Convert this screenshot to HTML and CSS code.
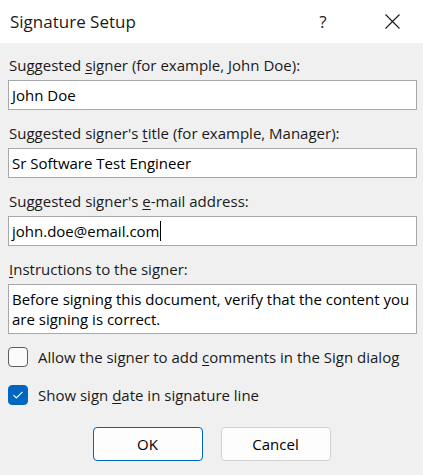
FILE: index.html
```html
<!DOCTYPE html>
<html>
<head>
<meta charset="utf-8">
<link rel="stylesheet" href="styles.css">
</head>
<body>
<div class="dialog">
  <div class="titlebar">
    <div class="title">Signature Setup</div>
    <div class="help">?</div>
    <div class="close">
      <svg width="15" height="15" viewBox="0 0 15 15"><path d="M0.5 0.5 L14.5 14.5 M14.5 0.5 L0.5 14.5" stroke="#1a1a1a" stroke-width="1.1" fill="none"/></svg>
    </div>
  </div>
  <div class="content">
    <div class="field">
      <div class="label">Suggested <u>s</u>igner (for example, John Doe):</div>
      <div class="input">John Doe</div>
    </div>
    <div class="field">
      <div class="label">Suggested signer's <u>t</u>itle (for example, Manager):</div>
      <div class="input">Sr Software Test Engineer</div>
    </div>
    <div class="field">
      <div class="label">Suggested signer's <u>e</u>-mail address:</div>
      <div class="input">john.doe@email.com<span class="caret"></span></div>
    </div>
    <div class="field">
      <div class="label"><u>I</u>nstructions to the signer:</div>
      <div class="input textarea">Before signing this document, verify that the content you are signing is correct.</div>
    </div>
    <div class="checks">
      <div class="check">
        <span class="box"></span>
        <span class="clabel">Allow the signer to add <u>c</u>omments in the Sign dialog</span>
      </div>
      <div class="check">
        <span class="box checked">
          <svg width="12" height="10" viewBox="0 0 12 10"><path d="M1.5 5.2 L4.3 8 L10.5 1.8" stroke="#fff" stroke-width="1.1" fill="none"/></svg>
        </span>
        <span class="clabel">Show sign <u>d</u>ate in signature line</span>
      </div>
    </div>
    <div class="buttons">
      <div class="btn primary">OK</div>
      <div class="btn">Cancel</div>
    </div>
  </div>
</div>
</body>
</html>
```
FILE: styles.css
```css
html, body {
  margin: 0;
  padding: 0;
  background: #f0f0f0;
}
body {
  font-family: "Open Sans", "Noto Sans", sans-serif;
  color: #1a1a1a;
  width: 423px;
  height: 475px;
  overflow: hidden;
}
.titlebar {
  height: 43px;
  background: #fff;
  display: flex;
  align-items: center;
}
.title {
  font-size: 17px;
  padding-left: 10px;
  flex: 1;
}
.help {
  font-size: 17px;
  width: 24px;
  text-align: center;
  margin-right: 50px;
}
.close {
  width: 15px;
  height: 15px;
  margin-right: 23px;
  display: flex;
}
.content {
  padding: 12px 6px 0 8px;
}
.field {
  margin-bottom: 13px;
}
.label {
  font-size: 15px;
  line-height: 20px;
  height: 20px;
  margin-bottom: 5px;
  margin-left: 1px;
  white-space: nowrap;
}
.label u, .clabel u {
  text-underline-offset: 2px;
}
.input {
  box-sizing: border-box;
  height: 30px;
  background: #fff;
  border: 1px solid #a8a8aa;
  font-size: 15px;
  line-height: 28px;
  padding-left: 3px;
  color: #000;
  display: flex;
  align-items: center;
}
.textarea {
  height: 50px;
  display: block;
  line-height: 20px;
  padding: 4px 4px 0 3px;
}
.caret {
  display: inline-block;
  width: 1px;
  height: 20px;
  background: #000;
  margin-left: 1px;
}
.checks {
  display: flex;
  flex-direction: column;
  gap: 18px;
  margin-top: 2px;
}
.check {
  display: flex;
  align-items: center;
  height: 20px;
}
.box {
  box-sizing: border-box;
  width: 20px;
  height: 20px;
  border: 1px solid #5f5f5f;
  border-radius: 4px;
  background: #fbfbfb;
  margin-right: 10px;
  display: flex;
  align-items: center;
  justify-content: center;
}
.box.checked {
  background: #0067c0;
  border-color: #0067c0;
}
.clabel {
  font-size: 15px;
  white-space: nowrap;
}
.buttons {
  display: flex;
  justify-content: center;
  gap: 18px;
  margin-top: 22px;
  padding-right: 2px;
}
.btn {
  box-sizing: border-box;
  width: 110px;
  height: 34px;
  border: 1px solid #d0d0d0;
  border-radius: 4px;
  background: #fdfdfd;
  display: flex;
  align-items: center;
  justify-content: center;
  font-size: 15px;
  color: #000;
}
.btn.primary {
  border-color: #0067c0;
}
```
